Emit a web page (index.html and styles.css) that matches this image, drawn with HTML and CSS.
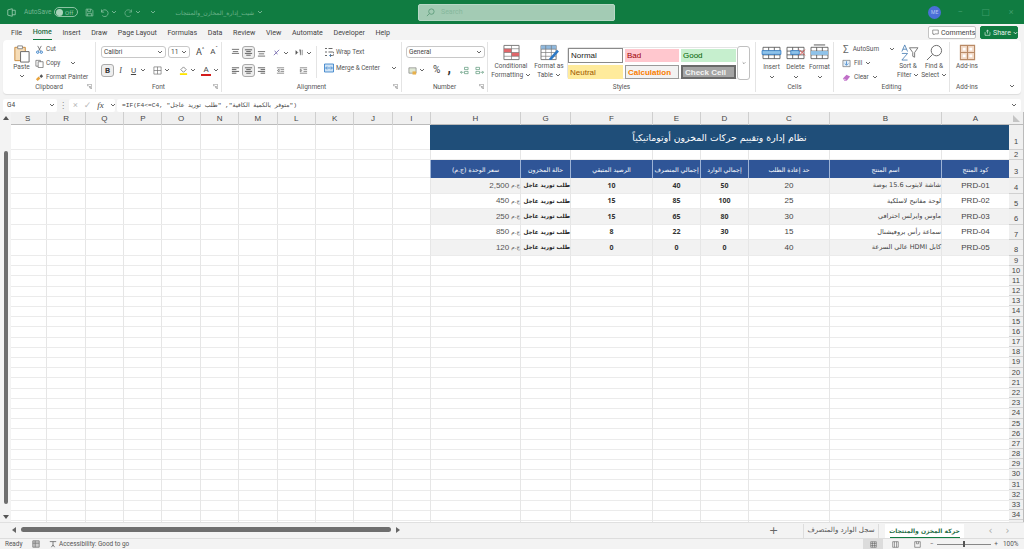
FILE: index.html
```html
<!DOCTYPE html>
<html lang="en">
<head>
<meta charset="UTF-8">
<meta name="viewport" content="width=device-width, initial-scale=1.0">
<title>Excel</title>
<link rel="stylesheet" href="styles.css">
</head>
<body>
<svg class="defs" aria-hidden="true">
  <symbol id="chev" viewBox="0 0 6 4"><path d="M1 1l2 2 2-2" fill="none" stroke="currentColor"/></symbol>
  <symbol id="launch" viewBox="0 0 7 7"><path d="M.5 3V.5H6.5V6.5H4M1 2.5h1.5M6 6L3.5 3.5M3.5 5.5v-2h2" fill="none" stroke="#777" stroke-width=".7"/></symbol>
  <symbol id="lines-c" viewBox="0 0 10 10"><path d="M1 2h8M2.5 4h5M1 6h8M2.5 8h5" stroke="#555" fill="none"/></symbol>
  <symbol id="lines-l" viewBox="0 0 10 10"><path d="M1 2h8M1 4h5M1 6h8M1 8h5" stroke="#555" fill="none"/></symbol>
  <symbol id="lines-r" viewBox="0 0 10 10"><path d="M1 2h8M4 4h5M1 6h8M4 8h5" stroke="#555" fill="none"/></symbol>
  <symbol id="sheetgrid" viewBox="0 0 22 18"><path d="M2 3.500h18v12H2zM2 7.500h18M2 11.500h18M8 3.500v12M14 3.500v12" fill="#fff" stroke="#555" stroke-width=".9"/></symbol>
</svg>

<header class="titlebar">
  <div class="tb-left">
    <svg class="tb-ic" viewBox="0 0 12 12"><path d="M1 2.500l6-1.500v10l-6-1.500zM7 3h4v6H7" fill="none" stroke="#a9d4bb"/></svg>
    <span class="tb-auto">AutoSave</span>
    <span class="toggle"><i></i>Off</span>
    <svg class="tb-ic" viewBox="0 0 12 12"><path d="M1.500 1.500h7l2 2v7h-9zM3.500 1.500v3h4v-3M3.500 10.500v-3.500h5v3.500" fill="none" stroke="#8cc4a4"/></svg>
    <svg class="tb-ic undo" viewBox="0 0 12 12"><path d="M2 2v3.500h3.500M2 5.500a4.500 4.500 0 1 1 1 4.500" fill="none" stroke="#8cc4a4"/></svg>
    <svg class="tb-ch"><use href="#chev"/></svg>
    <svg class="tb-ic" viewBox="0 0 12 12"><path d="M10 2v3.500H6.500M10 5.500a4.500 4.500 0 1 0-1 4.500" fill="none" stroke="#6fb48d"/></svg>
    <svg class="tb-ch"><use href="#chev"/></svg>
    <svg class="tb-ch tb-more"><use href="#chev"/></svg>
    <span class="tb-file" dir="rtl">شيت_إدارة_المخازن_والمنتجات</span>
    <svg class="tb-ch"><use href="#chev"/></svg>
  </div>
  <div class="search">
    <svg viewBox="0 0 10 10"><circle cx="6" cy="4" r="3" fill="none" stroke="#5f9d7c"/><path d="M4 6L1 9" stroke="#5f9d7c"/></svg>
    <span>Search</span>
  </div>
  <div class="tb-right">
    <span class="avatar">ME</span>
    <span class="win">&minus;</span>
    <span class="win">&#9633;</span>
    <span class="win">&times;</span>
  </div>
</header>

<nav class="menubar">
  <ul class="tabs">
    <li>File</li>
    <li class="on">Home</li>
    <li>Insert</li>
    <li>Draw</li>
    <li>Page Layout</li>
    <li>Formulas</li>
    <li>Data</li>
    <li>Review</li>
    <li>View</li>
    <li>Automate</li>
    <li>Developer</li>
    <li>Help</li>
  </ul>
  <button class="comments">
    <svg viewBox="0 0 10 10"><path d="M1 1.500h8v5.500H4L2.500 8.500V7H1z" fill="none" stroke="#555" stroke-width=".8"/></svg>Comments
  </button>
  <button class="share">
    <svg viewBox="0 0 10 10"><path d="M1.500 4.500v4.500h7V4.500M5 6.500V1.500M3 3.500l2-2 2 2" fill="none" stroke="#fff" stroke-width=".8"/></svg>Share<svg class="sm"><use href="#chev"/></svg>
  </button>
</nav>

<section class="ribbon">
  <div class="group g-clip">
    <div class="g-body">
      <div class="big paste">
        <svg class="big-ic" viewBox="0 0 18 20"><path d="M2 3.500h11v14H2z" fill="#f6ddb8" stroke="#c78a3e"/><path d="M5 2h5v3H5z" fill="#fff" stroke="#888"/><path d="M8 8h9v11H8z" fill="#fff" stroke="#666"/></svg>
        <span>Paste</span>
        <svg class="ch"><use href="#chev"/></svg>
      </div>
      <div class="stack">
        <div class="item"><svg viewBox="0 0 10 10"><path d="M3 1l3 5.500M7 1L4 6.500" stroke="#555" fill="none" stroke-width=".8"/><circle cx="3" cy="8" r="1.300" fill="none" stroke="#2b78c5"/><circle cx="7" cy="8" r="1.300" fill="none" stroke="#2b78c5"/></svg>Cut</div>
        <div class="item"><svg viewBox="0 0 10 10"><path d="M1 1.500h5v6.500H1z" fill="#fff" stroke="#666" stroke-width=".8"/><path d="M3.500 3h5.500v6.500H3.500z" fill="#fff" stroke="#666" stroke-width=".8"/></svg>Copy<svg class="ch copy-ch"><use href="#chev"/></svg></div>
        <div class="item"><svg viewBox="0 0 10 10"><path d="M1 7l3-3 2 2-3 3z" fill="#e8a33d"/><path d="M5 3.500l2-2 2 2-2 2z" fill="#555"/></svg>Format Painter</div>
      </div>
    </div>
    <div class="g-label">Clipboard<svg class="launch"><use href="#launch"/></svg></div>
  </div>

  <div class="group g-font">
    <div class="g-body rows">
      <div class="line">
        <div class="combo w-font">Calibri<svg class="ch"><use href="#chev"/></svg></div>
        <div class="combo w-size">11<svg class="ch"><use href="#chev"/></svg></div>
        <span class="grow-a">A<sup>^</sup></span>
        <span class="shrink-a">A<sup>ˇ</sup></span>
      </div>
      <div class="line tools">
        <span class="tbtn pressed"><b>B</b></span>
        <i class="it">I</i>
        <u class="un">U</u><svg class="ch"><use href="#chev"/></svg>
        <svg class="tic" viewBox="0 0 10 10"><path d="M1 1h8v8H1zM5 1v8M1 5h8" fill="none" stroke="#666" stroke-width=".7"/></svg><svg class="ch"><use href="#chev"/></svg>
        <svg class="tic fill" viewBox="0 0 10 10"><path d="M5 1l3 3-3 3-3-3z" fill="none" stroke="#666" stroke-width=".8"/><path d="M1 8h8v2H1z" fill="#ffe500"/></svg><svg class="ch"><use href="#chev"/></svg>
        <span class="color-a">A</span><svg class="ch"><use href="#chev"/></svg>
      </div>
    </div>
    <div class="g-label">Font<svg class="launch"><use href="#launch"/></svg></div>
  </div>

  <div class="group g-align">
    <div class="g-body">
      <div class="al-grid">
        <svg class="tic" viewBox="0 0 10 10"><path d="M1 1.500h8M2 4h6M1 6h8" stroke="#666" fill="none"/></svg>
        <span class="tbtn pressed"><svg class="tic"><use href="#lines-c"/></svg></span>
        <svg class="tic" viewBox="0 0 10 10"><path d="M1 4h8M2 6.500h6M1 9h8" stroke="#666" fill="none"/></svg>
        <span class="al-tool"><svg class="tic" viewBox="0 0 10 10"><path d="M2 8l6-6M3 3l3 4" stroke="#7a6fb0" fill="none"/></svg><svg class="ch"><use href="#chev"/></svg></span>
        <span class="al-tool"><svg class="tic" viewBox="0 0 10 10"><path d="M1 3v4l2-2zM5 2h1v6M8 2v6" fill="#555" stroke="#555" stroke-width=".7"/></svg><svg class="ch"><use href="#chev"/></svg></span>
        <svg class="tic"><use href="#lines-l"/></svg>
        <span class="tbtn pressed"><svg class="tic"><use href="#lines-c"/></svg></span>
        <svg class="tic"><use href="#lines-r"/></svg>
        <svg class="tic" viewBox="0 0 10 10"><path d="M1 2h8M5 4h4M5 6h4M1 8h8M3.500 3.500L1.500 5l2 1.500z" stroke="#666" fill="none" stroke-width=".8"/></svg>
        <svg class="tic" viewBox="0 0 10 10"><path d="M1 2h8M5 4h4M5 6h4M1 8h8M1.500 3.500L3.500 5l-2 1.500z" stroke="#666" fill="none" stroke-width=".8"/></svg>
      </div>
      <div class="stack al-wrap">
        <div class="item"><svg viewBox="0 0 10 10"><path d="M1 1.500h2M1 5h2M1 8.500h2M4.500 1.500h4M4.500 5h4a1.500 1.500 0 0 1 0 3.500H6" stroke="#444" fill="none" stroke-width=".8"/><path d="M7 7l-1.500 1.500L7 10" stroke="#2b78c5" fill="none" stroke-width=".8"/></svg>Wrap Text</div>
        <div class="item"><svg viewBox="0 0 10 10"><path d="M.5 1h9v8h-9z" fill="#cfe3f5" stroke="#2b78c5" stroke-width=".8"/><path d="M2 5h6M3 3.500L1.500 5 3 6.500M7 3.500L8.500 5 7 6.500" stroke="#2b78c5" fill="none" stroke-width=".7"/></svg>Merge &amp; Center<svg class="ch merge-ch"><use href="#chev"/></svg></div>
      </div>
    </div>
    <div class="g-label">Alignment<svg class="launch"><use href="#launch"/></svg></div>
  </div>

  <div class="group g-num">
    <div class="g-body rows">
      <div class="line"><div class="combo w-num">General<svg class="ch"><use href="#chev"/></svg></div></div>
      <div class="line num-tools">
        <svg class="tic" viewBox="0 0 10 10"><path d="M1 2h8v6H1z" fill="#dfe8d5" stroke="#777" stroke-width=".7"/><path d="M5 6h4v3.500H5z" fill="#e8b04a"/></svg><svg class="ch"><use href="#chev"/></svg>
        <span class="pct">%</span>
        <span class="comma">,</span>
        <svg class="tic" viewBox="0 0 10 10"><path d="M5 1.500h4v2.500H5zM5 6h4v2.500H5zM4 7H.5M2 5.500L.5 7 2 8.500" fill="none" stroke="#4a8c6a" stroke-width=".7"/></svg>
        <svg class="tic" viewBox="0 0 10 10"><path d="M1 1.500h4v2.500H1zM1 6h4v2.500H1zM6 7h3.500M8 5.500L9.500 7 8 8.500" fill="none" stroke="#4a8c6a" stroke-width=".7"/></svg>
      </div>
    </div>
    <div class="g-label">Number<svg class="launch"><use href="#launch"/></svg></div>
  </div>

  <div class="group g-styles">
    <div class="g-body">
      <div class="big wide">
        <svg class="big-ic" viewBox="0 0 22 18"><path d="M3 1.500h16v15H3z" fill="#fff" stroke="#777"/><path d="M3 5h8v4H3zM11 9h8v4h-8z" fill="#e2666a"/><path d="M3 5h16M3 9h16M3 13h16M11 1.500v15" stroke="#777" fill="none" stroke-width=".7"/></svg>
        <span>Conditional<br>Formatting <svg class="ch in"><use href="#chev"/></svg></span>
      </div>
      <div class="big wide">
        <svg class="big-ic" viewBox="0 0 22 18"><path d="M2 1.500h16v15H2z" fill="#fff" stroke="#777"/><path d="M2 1.500h16v4H2z" fill="#8fb8dd"/><path d="M2 5.500h16M2 9h16M2 13h16M7 1.500v15M13 1.500v15" stroke="#777" fill="none" stroke-width=".7"/><path d="M11 15l8-9 2 2-8 9h-2z" fill="#2b78c5"/></svg>
        <span>Format as<br>Table <svg class="ch in"><use href="#chev"/></svg></span>
      </div>
      <div class="gallery">
        <div class="st st-normal">Normal</div>
        <div class="st st-bad">Bad</div>
        <div class="st st-good">Good</div>
        <div class="st st-neutral">Neutral</div>
        <div class="st st-calc">Calculation</div>
        <div class="st st-check">Check Cell</div>
      </div>
      <div class="gallery-more"><svg class="ch"><use href="#chev"/></svg></div>
    </div>
    <div class="g-label">Styles</div>
  </div>

  <div class="group g-cells">
    <div class="g-body">
      <div class="big cell-btn">
        <svg class="big-ic" viewBox="0 0 22 18"><use href="#sheetgrid"/><path d="M1 7h20v4H1z" fill="#8fc3ea" stroke="#2b78c5" stroke-width=".8"/></svg>
        <span>Insert</span><svg class="ch"><use href="#chev"/></svg>
      </div>
      <div class="big cell-btn">
        <svg class="big-ic" viewBox="0 0 22 18"><use href="#sheetgrid"/><path d="M6 7h9v4H6z" fill="#8fc3ea" stroke="#2b78c5" stroke-width=".8"/><path d="M15 6l6 6M21 6l-6 6" stroke="#d9534f"/></svg>
        <span>Delete</span><svg class="ch"><use href="#chev"/></svg>
      </div>
      <div class="big cell-btn">
        <svg class="big-ic" viewBox="0 0 22 18"><use href="#sheetgrid"/><path d="M2 7.500h18v4H2z" fill="#8fc3ea"/><path d="M5 1h12" stroke="#555"/></svg>
        <span>Format</span><svg class="ch"><use href="#chev"/></svg>
      </div>
    </div>
    <div class="g-label">Cells</div>
  </div>

  <div class="group g-edit">
    <div class="g-body">
      <div class="stack ed-stack">
        <div class="item"><span class="sigma">&Sigma;</span>AutoSum<svg class="ch auto-ch"><use href="#chev"/></svg></div>
        <div class="item"><svg viewBox="0 0 10 10"><path d="M1 1.500h8v7H1z" fill="#e3eef8" stroke="#666" stroke-width=".7"/><path d="M5 2.500v4M3 5l2 2 2-2" stroke="#2b78c5" fill="none" stroke-width=".8"/></svg>Fill <svg class="ch in"><use href="#chev"/></svg></div>
        <div class="item"><svg viewBox="0 0 10 10"><path d="M1 6l4-4 4 2-4 5H3z" fill="#c06fc8"/><path d="M2 6.500l3 2" stroke="#fff" stroke-width=".7"/></svg>Clear <svg class="ch in"><use href="#chev"/></svg></div>
      </div>
      <div class="big ed-btn">
        <svg class="big-ic" viewBox="0 0 22 18"><path d="M7 1l-3 7M7 1l3 7M5 5.500h4M4 10h6l-6 7h6" stroke="#4a7fb5" fill="none" stroke-width=".9"/><path d="M12 4h9l-3.500 5v5l-2-1V9z" fill="none" stroke="#666" stroke-width=".9"/></svg>
        <span>Sort &amp;<br>Filter <svg class="ch in"><use href="#chev"/></svg></span>
      </div>
      <div class="big ed-btn">
        <svg class="big-ic" viewBox="0 0 22 18"><circle cx="13" cy="7" r="5.500" fill="none" stroke="#666"/><path d="M9 11l-6 6" stroke="#666"/></svg>
        <span>Find &amp;<br>Select <svg class="ch in"><use href="#chev"/></svg></span>
      </div>
    </div>
    <div class="g-label">Editing</div>
  </div>

  <div class="group g-add">
    <div class="g-body">
      <div class="big">
        <svg class="big-ic" viewBox="0 0 18 18"><path d="M1.500 1.500h15v15h-15zM1.500 9h15M9 1.500v15" fill="#f2d9c6" stroke="#b98a66" stroke-width="1.200"/><path d="M4 4h3v3H4zM11 4h3v3h-3zM4 11h3v3H4zM11 11h3v3h-3z" fill="#fff"/></svg>
        <span>Add-ins</span>
      </div>
    </div>
    <div class="g-label">Add-ins</div>
  </div>
  <div class="collapse"><svg class="ch"><use href="#chev"/></svg></div>
</section>

<div class="formulabar">
  <div class="namebox">G4<svg class="ch"><use href="#chev"/></svg></div>
  <span class="dots">&#8942;</span>
  <div class="fx-btns">
    <span>&times;</span><span>&#10003;</span><em>fx</em><svg class="ch"><use href="#chev"/></svg>
  </div>
  <div class="formula">
    <span dir="ltr">=IF(F4&lt;=C4, "متوفر بالكمية الكافية", "طلب توريد عاجل")</span>
    <svg class="ch"><use href="#chev"/></svg>
  </div>
</div>

<main class="sheet" dir="rtl">
  <div class="row-heads">
    <div class="corner"><i></i></div>
    <span class="rh r1">1</span><span class="rh r2">2</span><span class="rh r3">3</span>
    <span class="rh r4">4</span><span class="rh r4">5</span><span class="rh r4">6</span><span class="rh r4">7</span><span class="rh r4">8</span>
    <span class="rh">9</span><span class="rh">10</span><span class="rh">11</span><span class="rh">12</span><span class="rh">13</span><span class="rh">14</span><span class="rh">15</span><span class="rh">16</span><span class="rh">17</span><span class="rh">18</span><span class="rh">19</span><span class="rh">20</span><span class="rh">21</span>
    <span class="rh">22</span><span class="rh">23</span><span class="rh">24</span><span class="rh">25</span><span class="rh">26</span><span class="rh">27</span><span class="rh">28</span><span class="rh">29</span><span class="rh">30</span><span class="rh">31</span><span class="rh">32</span><span class="rh">33</span><span class="rh">34</span>
  </div>

  <div class="cells">
    <div class="cols">
      <span>A</span><span>B</span><span>C</span><span>D</span><span>E</span><span>F</span><span>G</span><span>H</span><span>I</span><span>J</span><span>K</span><span>L</span><span>M</span><span>N</span><span>O</span><span>P</span><span>Q</span><span>R</span><span>S</span>
    </div>

    <div class="row h-title">
      <div class="title">نظام إدارة وتقييم حركات المخزون أوتوماتيكياً</div>
      <div class="rest"></div>
    </div>
    <div class="row h-gap">
      <div class="c"></div><div class="c"></div><div class="c"></div><div class="c"></div><div class="c"></div><div class="c"></div><div class="c"></div><div class="c"></div>
      <div class="rest"></div>
    </div>
    <div class="row h-head">
      <div class="th">كود المنتج</div><div class="th">اسم المنتج</div><div class="th">حد إعادة الطلب</div><div class="th">إجمالي الوارد</div><div class="th">إجمالي المنصرف</div><div class="th">الرصيد المتبقي</div><div class="th">حالة المخزون</div><div class="th">سعر الوحدة (ج.م)</div>
      <div class="rest"></div>
    </div>
    <div class="row h-data alt">
      <div class="c mid">PRD-01</div><div class="c name">شاشة لابتوب 15.6 بوصة</div><div class="c mid">20</div><div class="c num">50</div><div class="c num">40</div><div class="c num">10</div><div class="c status">طلب توريد عاجل</div><div class="c price"><span class="cur">ج.م</span> 2,500</div>
      <div class="rest"></div>
    </div>
    <div class="row h-data">
      <div class="c mid">PRD-02</div><div class="c name">لوحة مفاتيح لاسلكية</div><div class="c mid">25</div><div class="c num">100</div><div class="c num">85</div><div class="c num">15</div><div class="c status">طلب توريد عاجل</div><div class="c price"><span class="cur">ج.م</span> 450</div>
      <div class="rest"></div>
    </div>
    <div class="row h-data alt">
      <div class="c mid">PRD-03</div><div class="c name">ماوس وايرلس احترافي</div><div class="c mid">30</div><div class="c num">80</div><div class="c num">65</div><div class="c num">15</div><div class="c status">طلب توريد عاجل</div><div class="c price"><span class="cur">ج.م</span> 250</div>
      <div class="rest"></div>
    </div>
    <div class="row h-data">
      <div class="c mid">PRD-04</div><div class="c name">سماعة رأس بروفيشنال</div><div class="c mid">15</div><div class="c num">30</div><div class="c num">22</div><div class="c num">8</div><div class="c status">طلب توريد عاجل</div><div class="c price"><span class="cur">ج.م</span> 850</div>
      <div class="rest"></div>
    </div>
    <div class="row h-data alt">
      <div class="c mid">PRD-05</div><div class="c name">كابل HDMI عالي السرعة</div><div class="c mid">40</div><div class="c num">0</div><div class="c num">0</div><div class="c num">0</div><div class="c status">طلب توريد عاجل</div><div class="c price"><span class="cur">ج.م</span> 120</div>
      <div class="rest"></div>
    </div>

    <div class="blank-rows">
      <i></i><i></i><i></i><i></i><i></i><i></i><i></i><i></i><i></i><i></i><i></i><i></i><i></i><i></i><i></i><i></i><i></i><i></i><i></i>
    </div>
  </div>

  <div class="vscroll">
    <span class="arr up"></span>
    <span class="thumb-v"></span>
    <span class="arr down"></span>
  </div>
</main>

<div class="sheetbar">
  <div class="hscroll">
    <span class="arr left"></span>
    <span class="thumb-h"></span>
    <span class="arr right"></span>
  </div>
  <div class="sheet-tabs">
    <span class="add">+</span>
    <span class="stab" dir="rtl">سجل الوارد والمتصرف</span>
    <span class="stab active" dir="rtl">حركة المخزن والمنتجات</span>
    <span class="nav">&#8249;</span>
    <span class="nav">&#8250;</span>
  </div>
</div>

<footer class="statusbar">
  <span class="ready">Ready</span>
  <svg class="st-ic" viewBox="0 0 10 10"><path d="M1 1h8v8H1z" fill="#ccc" stroke="#777"/><path d="M1 4h8M4 1v8" stroke="#777"/></svg>
  <svg class="st-ic acc" viewBox="0 0 10 10"><path d="M1 2h8M5 2v4M3 9l2-3 2 3" fill="none" stroke="#666"/></svg>
  <span>Accessibility: Good to go</span>
  <div class="st-right">
    <span class="view on"><svg viewBox="0 0 10 10"><path d="M1 1h8v8H1zM1 3.500h8M1 6.500h8M3.500 1v8M6.500 1v8" fill="none" stroke="#555" stroke-width=".7"/></svg></span>
    <span class="view"><svg viewBox="0 0 10 10"><path d="M1 1h8v8H1zM3.500 1v8M6.500 1v8" fill="none" stroke="#555" stroke-width=".8"/></svg></span>
    <span class="view"><svg viewBox="0 0 10 10"><path d="M1 1h8v8H1zM3.500 1v3h3V1" fill="none" stroke="#555" stroke-width=".8"/></svg></span>
    <div class="zoom">
      <span>&minus;</span>
      <div class="slider"><i></i></div>
      <span>+</span>
    </div>
    <span class="pct100">100%</span>
  </div>
</footer>
</body>
</html>
```

FILE: styles.css
```css
* { box-sizing: border-box; }
html, body { margin: 0; padding: 0; height: 549px; overflow: hidden; }
body { width: 1024px; display: flex; flex-direction: column; background-color: #f3f3f3; color: #444; font-family: Roboto, "DejaVu Sans", sans-serif; font-size: 7px; }
svg { display: block; flex: none; }
.defs { width: 0; height: 0; overflow: hidden; position: absolute; }
.ch { width: 6px; height: 4px; color: #666; }
.ch.in { display: inline-block; vertical-align: middle; }

/* title bar */
.titlebar { height: 24px; flex: none; background-color: #107c41; display: flex; align-items: center; position: relative; }
.tb-left { display: flex; align-items: center; width: 418px; padding-left: 7px; color: #8cc4a4; }
.tb-ic { width: 9px; height: 9px; }
.tb-left .tb-ic:first-child { margin-right: 8px; }
.tb-left .undo { margin-left: 6px; }
.tb-auto { font-size: 6.500px; margin-right: 4px; color: #74b592; width: 26px; }
.toggle { width: 24px; height: 10px; border: 1px solid #8cc4a4; border-radius: 6px; display: flex; align-items: center; font-size: 6px; gap: 2px; padding-left: 1px; margin-right: 7px; }
.toggle i { width: 7px; height: 7px; background-color: #a9d4bb; border-radius: 50%; }
.tb-ch { width: 6px; height: 4px; margin: 0 7px 0 2px; color: #74b592; }
.tb-more { margin-right: 12px; }
.tb-file { font-family: "DejaVu Sans", sans-serif; font-size: 6px; color: #6fb48d; margin-right: 1px; width: 86px; white-space: nowrap; }
.search { width: 197px; height: 17px; background-color: #a3cbb4; border: 1px solid #b8d8c6; border-radius: 2px; display: flex; align-items: center; gap: 6px; padding-left: 7px; color: #86b89c; font-size: 7px; }
.search svg { width: 9px; height: 9px; }
.tb-right { margin-left: auto; display: flex; align-items: center; }
.avatar { width: 13px; height: 13px; border-radius: 50%; background-color: #4a6fd8; color: #b9c8ef; font-size: 5px; display: flex; align-items: center; justify-content: center; margin-right: 6px; }
.win { width: 25.600px; text-align: center; color: #3f9d6b; font-size: 9px; }

/* tabs row */
.menubar { height: 16px; flex: none; display: flex; align-items: center; padding-right: 6px; }
.tabs { list-style: none; margin: 0; padding: 0 0 0 11px; display: flex; gap: 10.600px; font-size: 7.100px; flex: 1; color: #444; white-space: nowrap; }
.tabs li { line-height: 15px; position: relative; }
.tabs li.on { color: #1e6b45; font-weight: 500; border-bottom: 1.500px solid #107c41; line-height: 14px; }
.menubar button { font-family: inherit; font-size: 7px; height: 13px; display: flex; align-items: center; gap: 2px; border-radius: 2px; padding: 0 3px; }
.menubar button svg { width: 7px; height: 7px; }
.comments { width: 48px; background-color: #fff; border: 1px solid #c4c4c4; color: #444; margin-right: 4px; margin-top: 1px; }
.share { width: 38px; background-color: #107c41; border: 1px solid #107c41; color: #e3f1e9; margin-top: 1px; }
.menubar .share .sm { width: 5px; height: 4px; color: #fff; }

/* ribbon */
.ribbon { height: 54px; flex: none; margin: 0 3px 4px; background-color: #fff; border-radius: 4px; display: flex; box-shadow: 0 1px 1px #ddd; position: relative; }
.group { display: flex; flex-direction: column; position: relative; border-right: 1px solid #e4e4e4; margin: 2px 0; height: 50px; }
.g-body { display: flex; flex: 1; min-height: 0; }
.g-label { height: 10px; font-size: 6.500px; color: #555; text-align: center; line-height: 10px; position: relative; }
.launch { width: 5px; height: 5px; position: absolute; right: 3px; top: 2px; }
.g-clip { width: 93px; }
.g-font { width: 126px; }
.g-align { width: 180px; }
.g-num { width: 86px; }
.g-styles { width: 268px; }
.g-cells { width: 78px; }
.g-edit { width: 116px; }
.g-add { width: 34px; border-right: 0; }
.collapse { margin-left: auto; align-self: flex-end; padding: 0 6px 6px 0; }

.big { display: flex; flex-direction: column; align-items: center; text-align: center; line-height: 8.500px; font-size: 6.500px; color: #555; padding-top: 2px; white-space: nowrap; }
.big-ic { width: 21px; height: 17px; margin-bottom: 1px; }
.paste { width: 27px; margin-left: 5px; }
.paste .big-ic { height: 19px; margin-bottom: 0; }
.paste .ch { margin-top: 2px; }
.stack { display: flex; flex-direction: column; justify-content: space-between; padding: 2px 0 0; }
.item { display: flex; align-items: center; gap: 2px; font-size: 6.400px; height: 10px; white-space: nowrap; color: #555; }
.item svg:first-child { width: 9px; height: 9px; }
.copy-ch { margin-left: 8px; }

.rows { flex-direction: column; padding: 4px 0 0 5px; gap: 5px; }
.line { display: flex; align-items: center; gap: 2px; }
.combo { height: 12px; background-color: #fff; border: 1px solid #c8c8c8; border-radius: 3px; font-size: 6.500px; display: flex; align-items: center; justify-content: space-between; padding: 0 2px; color: #444; }
.w-font { width: 65px; }
.w-size { width: 22px; margin-right: 2px; }
.w-num { width: 79px; }
.g-num .rows { padding-left: 4px; }
.grow-a, .shrink-a { font-size: 9px; width: 12px; text-align: center; line-height: 10px; }
.shrink-a { font-size: 8px; }
.grow-a sup, .shrink-a sup { font-size: 5px; line-height: 0; }
.tools { height: 14px; gap: 2px; }
.tic { width: 9px; height: 9px; }
.tbtn { display: flex; align-items: center; justify-content: center; width: 13px; height: 13px; }
.tbtn.pressed { background-color: #eee; border: 1px solid #aaa; border-radius: 3px; font-size: 8px; color: #333; }
.it { width: 9px; font-size: 8px; font-family: "Liberation Serif", serif; text-align: center; }
.un { width: 9px; margin-left: 2px; font-size: 8px; text-align: center; }
.tools .tic { margin-left: 5px; }
.tools .fill { margin-left: 7px; }
.color-a { width: 10px; margin-left: 3px; font-size: 8px; text-align: center; line-height: 9px; border-bottom: 2px solid #d41c1c; }

.g-align .g-body { padding: 4px 0 0 7px; }
.al-grid { width: 88px; display: grid; grid-template-columns: 13px 13px 13px 24px 23px; align-items: center; justify-items: center; row-gap: 5px; grid-auto-rows: 13px; border-right: 1px solid #e4e4e4; height: 32px; }
.al-tool { display: flex; align-items: center; gap: 2px; }
.al-wrap { padding: 1px 0 7px 7px; height: 34px; gap: 5px; justify-content: flex-start; }
.al-wrap .item { height: 12px; }
.al-wrap svg:first-child { width: 10px; height: 10px; }
.merge-ch { margin-left: 9px; }

.num-tools { height: 14px; gap: 2px; padding-left: 2px; }
.pct { font-size: 10px; margin: 0 2px 0 6px; line-height: 10px; }
.comma { font-size: 14px; font-weight: 700; line-height: 6px; width: 10px; height: 10px; text-align: center; color: #333; }
.num-tools .tic:nth-last-child(-n+2) { margin-left: 4px; }

.wide { width: 38px; }
.g-styles .g-body { padding-left: 4px; }
.gallery { width: 170px; height: 32px; margin: 5px 0 0 -1px; display: grid; grid-template-columns: 55px 54px 55px; grid-template-rows: 15px 14px; gap: 2px 2px; border: 1px solid #e4e4e4; border-right: 0; border-radius: 3px 0 0 3px; padding: 0 1px 0 0; font-family: "Liberation Sans", sans-serif; font-size: 8px; }
.st { display: flex; align-items: center; padding-left: 2px; white-space: nowrap; }
.st-normal { background-color: #fff; border: 1px solid #8a8a8a; color: #222; }
.st-bad { background-color: #ffc7ce; color: #9c0006; margin: 1px 0; }
.st-good { background-color: #c6efce; color: #006100; margin: 1px 0; }
.st-neutral { background-color: #ffeb9c; color: #9c5700; }
.st-calc { background-color: #f2f2f2; border: 1px solid #9a9a9a; color: #fa7d00; font-weight: 700; }
.st-check { background-color: #a5a5a5; border: 2px solid #6a6a6a; color: #f4f4f4; font-weight: 700; }
.gallery-more { width: 13px; height: 34px; margin-top: 4px; background-color: #fff; border: 1px solid #c0c0c0; border-radius: 3px; display: flex; align-items: center; justify-content: center; }
.gallery-more .ch { width: 4px; }

.g-cells .g-body { padding-left: 4px; gap: 1px; }
.cell-btn { width: 23px; }
.cell-btn .big-ic { margin-bottom: 2px; }
.cell-btn .ch { margin-top: 3px; }

.ed-stack { width: 61px; padding-left: 8px; }
.sigma { width: 9px; font-size: 10px; line-height: 9px; color: #666; text-align: center; }
.ed-stack .item { gap: 3px; }
.auto-ch { margin-left: 7px; }
.ed-btn { width: 26px; }
.g-add .big { width: 34px; }
.g-add .g-label { font-size: 6.500px; }

/* formula bar */
.formulabar { height: 14px; flex: none; display: flex; align-items: center; padding: 0 3px; }
.namebox { width: 54px; height: 13px; background-color: #fff; display: flex; align-items: center; justify-content: space-between; padding: 0 2px 0 4px; border-radius: 2px; font-size: 6.500px; }
.dots { width: 12px; text-align: center; color: #888; font-size: 8px; }
.fx-btns { width: 46px; height: 13px; background-color: #fff; display: flex; align-items: center; gap: 6px; padding: 0 3px 0 4px; color: #bbb; font-size: 9px; border-radius: 2px; margin-right: 2px; }
.fx-btns em { font-family: "Liberation Serif", serif; color: #444; font-size: 9px; }
.formula { flex: 1; height: 13px; background-color: #fff; display: flex; align-items: center; justify-content: space-between; padding: 0 4px 0 5px; border-radius: 2px; font-family: "Liberation Mono", "DejaVu Sans", monospace; font-size: 6.200px; color: #444; }

/* sheet */
.sheet { height: 410px; flex: none; display: flex; background-color: #fff; font-family: "Liberation Sans", sans-serif; overflow: hidden; }
.row-heads { width: 15px; flex: none; display: flex; flex-direction: column; background-color: #f0f0f0; border-right: 1px solid #bbb; overflow: hidden; }
.corner { height: 13px; flex: none; border-bottom: 1px solid #bbb; display: flex; justify-content: center; align-items: center; }
.corner i { width: 0; height: 0; border-bottom: 7px solid #c4c4c4; border-right: 7px solid transparent; }
.rh { height: 10.200px; flex: none; font-size: 7.500px; line-height: 10px; text-align: center; color: #444; border-bottom: 1px solid #d0d0d0; direction: ltr; }
.rh.r1 { height: 25px; line-height: 34px; }
.rh.r2 { height: 10px; }
.rh.r3 { height: 18px; line-height: 24px; }
.rh.r4 { height: 15.500px; line-height: 20px; }

.cells { --cols: 68px 112px 81px 48px 48px 82px 50px 90px repeat(11, 38.360px); width: 998px; flex: none; display: flex; flex-direction: column; }
.cols { height: 13px; flex: none; display: grid; grid-template-columns: var(--cols); background-color: #f0f0f0; border-bottom: 1px solid #bbb; }
.cols span { text-align: center; font-size: 8px; line-height: 13px; color: #444; border-left: 1px solid #cfcfcf; }
.row { display: grid; grid-template-columns: var(--cols); flex: none; }
.h-title { height: 25px; }
.h-gap { height: 10px; }
.h-head { height: 18px; }
.h-data { height: 15.500px; }
.rest { grid-column: span 11; background-image: repeating-linear-gradient(to left, transparent 0, transparent 37.360px, #e6e6e6 37.360px, #e6e6e6 38.360px); border-bottom: 1px solid #ebebeb; }
.c { border-left: 1px solid #e6e6e6; border-bottom: 1px solid #ebebeb; font-size: 8px; display: flex; align-items: center; white-space: nowrap; color: #444; }
.alt .c { background-color: #f2f2f2; }
.title { grid-column: span 8; background-color: #1f4e79; color: #fff; font-family: "DejaVu Sans", sans-serif; font-size: 9.300px; display: flex; align-items: center; justify-content: center; }
.th { background-color: #2f5597; color: #fff; font-family: "DejaVu Sans", sans-serif; font-size: 6.200px; display: flex; align-items: center; justify-content: center; border-left: 1px solid #9db3d6; white-space: nowrap; }
.mid { justify-content: center; }
.name { font-family: "DejaVu Sans", sans-serif; font-size: 6.500px; }
.num { justify-content: center; font-family: "Noto Sans", sans-serif; font-weight: 700; font-size: 7px; color: #333; }
.status { font-family: "DejaVu Sans", sans-serif; font-weight: 700; font-size: 5.600px; color: #222; }
.price { font-family: "Liberation Sans", "DejaVu Sans", sans-serif; font-size: 8px; color: #555; gap: 2px; }
.cur { font-family: "DejaVu Sans", sans-serif; font-size: 5.500px; }
.blank-rows { flex: 1; display: grid; grid-template-columns: var(--cols); background-image: repeating-linear-gradient(to bottom, transparent 0, transparent 9.200px, #ebebeb 9.200px, #ebebeb 10.200px); }
.blank-rows i { border-left: 1px solid #e6e6e6; }

.vscroll { width: 11px; flex: none; background-color: #f3f3f3; display: flex; flex-direction: column; align-items: center; }
.arr { width: 0; height: 0; flex: none; }
.arr.up { border: 3px solid transparent; border-top: 0; border-bottom: 4px solid #555; margin-top: 4px; }
.arr.down { border: 3px solid transparent; border-bottom: 0; border-top: 4px solid #555; margin-top: 11px; }
.thumb-v { width: 4px; height: 353px; margin-top: 31px; background-color: #6e6e6e; border-radius: 2px; }

/* sheet tabs */
.sheetbar { height: 16px; flex: none; display: flex; align-items: center; border-top: 1px solid #e0e0e0; }
.hscroll { width: 400px; display: flex; align-items: center; padding: 0 0 2px 12px; gap: 5px; flex: none; }
.arr.left { border: 3px solid transparent; border-left: 0; border-right: 4px solid #666; }
.arr.right { border: 3px solid transparent; border-right: 0; border-left: 4px solid #666; }
.thumb-h { width: 370px; height: 5px; background-color: #6e6e6e; border-radius: 3px; }
.sheet-tabs { flex: 1; display: flex; align-items: center; font-family: "DejaVu Sans", sans-serif; }
.add { margin-left: 369px; width: 8px; font-size: 11px; line-height: 14px; color: #666; text-align: center; }
.stab { height: 14px; line-height: 13px; font-size: 7px; white-space: nowrap; color: #555; text-align: center; }
.stab:not(.active) { width: 76px; margin-left: 26px; border-right: 1px solid #ddd; border-left: 1px solid #ddd; }
.stab.active { width: 79px; margin-left: 6px; background: #fff linear-gradient(#107c41, #107c41) center bottom / 70px 1px no-repeat; color: #1e6b45; font-weight: 700; font-size: 6px; }
.nav { width: 17px; text-align: center; color: #aaa; font-size: 10px; line-height: 12px; }
.stab.active + .nav { margin-left: 18px; }

/* status bar */
.statusbar { height: 11px; flex: none; display: flex; align-items: center; border-top: 1px solid #ddd; font-size: 6.400px; color: #555; padding-left: 5px; line-height: 10px; }
.ready { width: 27px; }
.st-ic { width: 8px; height: 8px; }
.acc { margin: 0 2px 0 9px; }
.st-right { margin-left: auto; display: flex; align-items: center; height: 10px; padding-right: 3px; }
.view { width: 20px; height: 10px; display: flex; align-items: center; justify-content: center; margin-right: 2px; }
.view.on { background-color: #dcdcdc; }
.view svg { width: 7px; height: 7px; }
.zoom { display: flex; align-items: center; gap: 3px; margin: 0 5px 0 1px; width: 68px; }
.slider { flex: 1; height: 1px; background-color: #888; display: flex; justify-content: center; align-items: center; }
.slider i { width: 2px; height: 6px; background-color: #555; }
.pct100 { width: 18px; }
```
